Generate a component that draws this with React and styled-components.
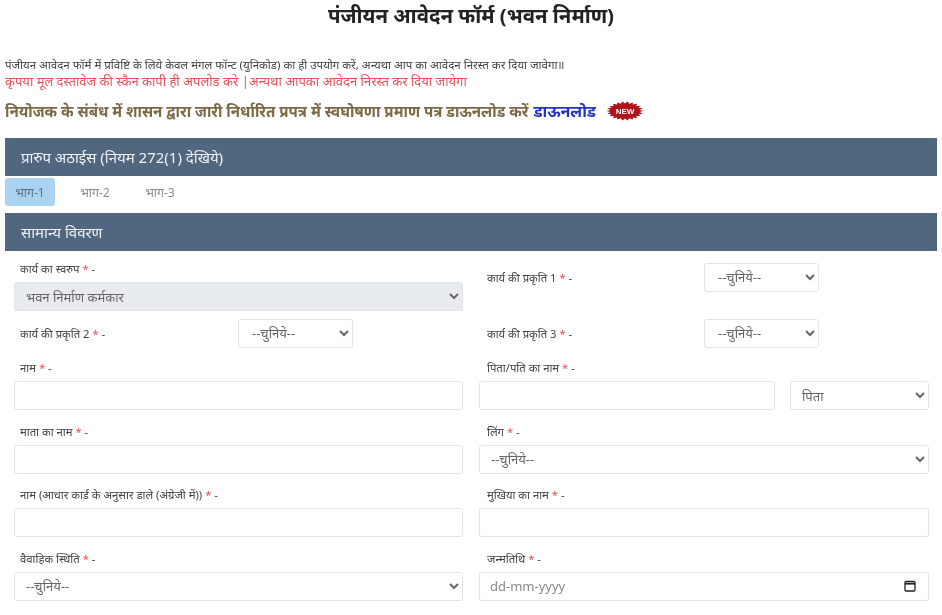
import React from 'react'
import styled, { createGlobalStyle } from 'styled-components'

const hindi = `"Noto Sans", "Noto Sans Devanagari", "Lohit Devanagari", "Open Sans", sans-serif`

const GlobalStyle = createGlobalStyle`
  html, body {
    margin: 0;
    padding: 0;
    background: #fff;
    overflow: hidden;
  }
  body {
    font-family: ${hindi};
    color: #333;
  }
`

const Page = styled.div`
  width: 942px;
  height: 615px;
  overflow: hidden;
  filter: blur(0.35px);
`

const Title = styled.h1`
  margin: 0;
  height: 54px;
  padding-top: 1px;
  box-sizing: border-box;
  text-align: center;
  font-size: 20.4px;
  line-height: 28px;
  font-weight: 700;
  color: #222;
`

const Note = styled.div`
  padding-left: 5px;
  font-size: 11.5px;
  line-height: 16px;
  height: 16px;
  margin-top: 3px;
  white-space: nowrap;
  color: #444;
`

const RedNote = styled.div`
  padding-left: 5px;
  height: 16px;
  font-size: 13px;
  line-height: 16px;
  white-space: nowrap;
  color: #e8505a;
`

const EmployerNote = styled.div`
  display: flex;
  align-items: center;
  padding-left: 5px;
  height: 24px;
  margin-top: 10px;
  font-size: 15.1px;
  font-weight: 700;
  white-space: nowrap;
  color: #7b6a45;
`

const DownloadLink = styled.a`
  margin-left: 5px;
  font-size: 16px;
  color: #2233c4;
`

const NewBadge = styled.svg`
  margin-left: 10px;
  flex: none;
`

const Bar = styled.div`
  margin: ${p => p.$top}px 5px 0;
  height: 38px;
  padding-left: 16px;
  display: flex;
  align-items: center;
  font-size: 15px;
  color: #eef1f5;
  background: #51667f;
`

const Tabs = styled.div`
  display: flex;
  margin: 2px 5px 0;
  height: 28px;
`

const Tab = styled.div`
  width: 50px;
  margin-right: 15px;
  display: flex;
  align-items: center;
  justify-content: center;
  font-size: 12.3px;
  border-radius: 3px;
  color: ${p => (p.$active ? '#5b7186' : '#8b8b8b')};
  background: ${p => (p.$active ? '#a9d3f1' : 'transparent')};
`

const Form = styled.div`
  display: grid;
  grid-template-columns: 466px 466px;
  margin: 0 5px;
`

const Column = styled.div`
  display: flex;
  flex-direction: column;
  padding-top: 6px;
`

const FirstRows = styled.div`
  grid-column: 1 / -1;
  display: grid;
  grid-template-columns: 466px 466px;
`

const Field = styled.div`
  height: ${p => p.$height || 63.67}px;
  padding: 0 8px 0 ${p => (p.$right ? 8 : 9)}px;
  box-sizing: border-box;
`

const Label = styled.div`
  height: 15px;
  margin: 0 0 6px;
  padding-left: ${p => (p.$right ? 8 : 6)}px;
  padding-top: ${p => p.$top || 0}px;
  font-size: 11.3px;
  line-height: 15px;
  white-space: nowrap;
  color: #444;
`

const Star = styled.span`
  color: #e8505a;
`

const InlineField = styled.div`
  display: flex;
  align-items: center;
  height: ${p => p.$height}px;
  padding-left: ${p => p.$pad}px;
  font-size: 11.3px;
  white-space: nowrap;
  color: #444;
`

const InlineLabel = styled.div`
  width: ${p => p.$width}px;
`

const controlBase = `
  box-sizing: border-box;
  height: 29px;
  border: 1px solid #e1e4e8;
  border-radius: 3px;
  background-color: #fff;
  font-family: ${hindi};
  font-size: 13px;
  color: #666;
  outline: none;
`

const Select = styled.select`
  ${controlBase}
  width: ${p => p.$width || '100%'};
  padding-left: ${p => (p.$small ? 9 : 7)}px;
  background-color: ${p => (p.disabled ? '#e9ecef' : '#fff')};
  opacity: 1;
`

const Input = styled.input`
  ${controlBase}
  display: block;
  width: 100%;
`

const Pair = styled.div`
  display: flex;
  gap: 15px;
`

const FatherInput = styled(Input)`
  width: 296px;
  flex: none;
`

const DateBox = styled.div`
  ${controlBase}
  display: flex;
  align-items: center;
  justify-content: space-between;
  padding: 0 12px 0 10px;
  color: #8a8a8a;
`

const required = text => (
  <>
    {text} <Star>*</Star> -
  </>
)

const choose = '--चुनिये--'

const Choice = ({ value = choose, ...props }) => (
  <Select defaultValue={value} {...props}>
    <option>{value}</option>
  </Select>
)

const CalendarIcon = () => (
  <svg width="12" height="12" viewBox="0 0 12 12" fill="none" stroke="#222" strokeWidth="1.3">
    <rect x="1" y="1.4" width="10" height="9.6" rx="1" />
    <path d="M1 3.6h10" strokeWidth="2" />
  </svg>
)

// oval starburst behind the NEW text
const burst = Array.from({ length: 44 }, (_, i) => {
  const a = (i / 44) * Math.PI * 2
  const k = i % 2 ? 0.8 : 1
  return `${(19 + 18.5 * k * Math.cos(a)).toFixed(1)},${(10 + 9.5 * k * Math.sin(a)).toFixed(1)}`
}).join(' ')

const Badge = () => (
  <NewBadge width="38" height="20" viewBox="0 0 38 20">
    <polygon points={burst} fill="#b0141d" />
    <text x="19" y="13" textAnchor="middle" fontFamily="Liberation Sans, sans-serif" fontSize="8" fontWeight="700" fill="#fff">NEW</text>
  </NewBadge>
)

export default function App() {
  return (
    <Page>
      <GlobalStyle />
      <Title>पंजीयन आवेदन फॉर्म (भवन निर्माण)</Title>
      <Note>पंजीयन आवेदन फॉर्म में प्रविष्टि के लिये केवल मंगल फॉन्ट (युनिकोड) का ही उपयोग करें, अन्यथा आप का आवेदन निरस्त कर दिया जावेगा॥</Note>
      <RedNote>कृपया मूल दस्तावेज की स्कैन कापी ही अपलोड करे |अन्यथा आपका आवेदन निरस्त कर दिया जायेगा</RedNote>
      <EmployerNote>
        नियोजक के संबंध में शासन द्वारा जारी निर्धारित प्रपत्र में स्वघोषणा प्रमाण पत्र डाऊनलोड करें
        <DownloadLink>डाऊनलोड</DownloadLink>
        <Badge />
      </EmployerNote>
      <Bar $top={15}>प्रारुप अठाईस (नियम 272(1) देखिये)</Bar>
      <Tabs>
        <Tab $active>भाग-1</Tab>
        <Tab>भाग-2</Tab>
        <Tab>भाग-3</Tab>
      </Tabs>
      <Bar $top={7}>सामान्य विवरण</Bar>
      <Form>
        <FirstRows>
          <Field $height={61}>
            <Label $top={10}>{required('कार्य का स्वरुप')}</Label>
            <Choice value="भवन निर्माण कर्मकार" disabled />
          </Field>
          <InlineField $height={52} $pad={16}>
            <InlineLabel $width={217}>{required('कार्य की प्रकृति 1')}</InlineLabel>
            <Choice $width="115px" $small />
          </InlineField>
          <InlineField $height={42} $pad={15}>
            <InlineLabel $width={218}>{required('कार्य की प्रकृति 2')}</InlineLabel>
            <Choice $width="115px" $small />
          </InlineField>
          <InlineField $height={42} $pad={16}>
            <InlineLabel $width={217}>{required('कार्य की प्रकृति 3')}</InlineLabel>
            <Choice $width="115px" $small />
          </InlineField>
        </FirstRows>
        <Column>
          <Field><Label>{required('नाम')}</Label><Input /></Field>
          <Field><Label>{required('माता का नाम')}</Label><Input /></Field>
          <Field><Label>{required('नाम (आधार कार्ड के अनुसार डाले (अंग्रेजी में))')}</Label><Input /></Field>
          <Field><Label>{required('वैवाहिक स्थिति')}</Label><Choice /></Field>
        </Column>
        <Column>
          <Field $right>
            <Label $right>{required('पिता/पति का नाम')}</Label>
            <Pair><FatherInput /><Choice value="पिता" /></Pair>
          </Field>
          <Field $right><Label $right>{required('लिंग')}</Label><Choice /></Field>
          <Field $right><Label $right>{required('मुखिया का नाम')}</Label><Input /></Field>
          <Field $right>
            <Label $right>{required('जन्मतिथि')}</Label>
            <DateBox>dd-mm-yyyy<CalendarIcon /></DateBox>
          </Field>
        </Column>
      </Form>
    </Page>
  )
}
